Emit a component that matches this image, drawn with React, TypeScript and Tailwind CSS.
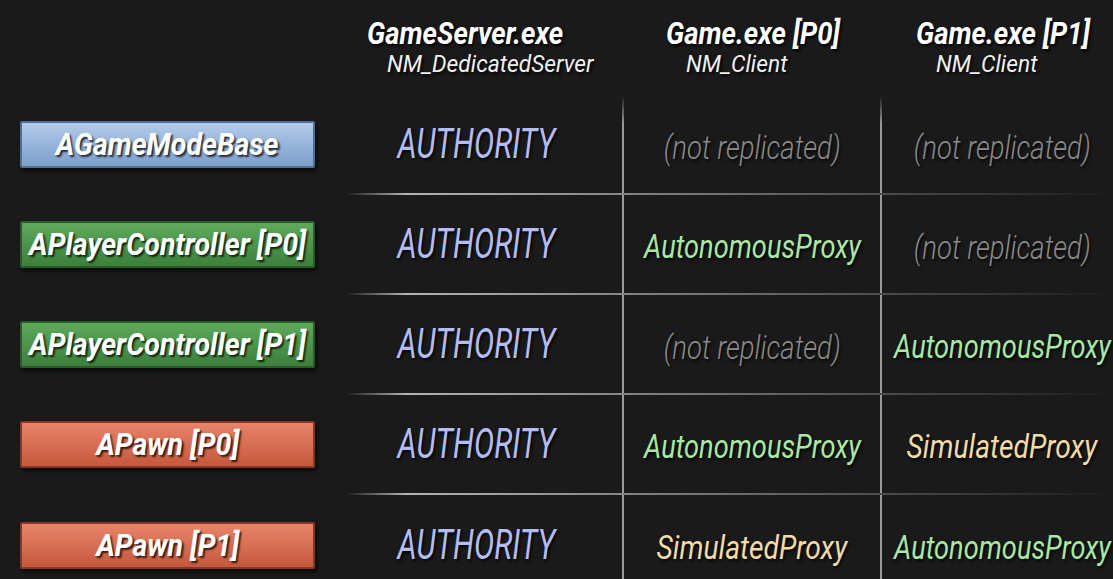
import React from "react";

type Cell = { text: string; kind: "auth" | "none" | "auto" | "sim" };

const rows: { label: string; color: "blue" | "green" | "orange"; cells: Cell[] }[] = [
  {
    label: "AGameModeBase",
    color: "blue",
    cells: [
      { text: "AUTHORITY", kind: "auth" },
      { text: "(not replicated)", kind: "none" },
      { text: "(not replicated)", kind: "none" },
    ],
  },
  {
    label: "APlayerController [P0]",
    color: "green",
    cells: [
      { text: "AUTHORITY", kind: "auth" },
      { text: "AutonomousProxy", kind: "auto" },
      { text: "(not replicated)", kind: "none" },
    ],
  },
  {
    label: "APlayerController [P1]",
    color: "green",
    cells: [
      { text: "AUTHORITY", kind: "auth" },
      { text: "(not replicated)", kind: "none" },
      { text: "AutonomousProxy", kind: "auto" },
    ],
  },
  {
    label: "APawn [P0]",
    color: "orange",
    cells: [
      { text: "AUTHORITY", kind: "auth" },
      { text: "AutonomousProxy", kind: "auto" },
      { text: "SimulatedProxy", kind: "sim" },
    ],
  },
  {
    label: "APawn [P1]",
    color: "orange",
    cells: [
      { text: "AUTHORITY", kind: "auth" },
      { text: "SimulatedProxy", kind: "sim" },
      { text: "AutonomousProxy", kind: "auto" },
    ],
  },
];

const badgeClass: Record<string, string> = {
  blue: "bg-gradient-to-b from-[#b2cbea] to-[#7c9fcb] border-[#4f6f98]",
  green: "bg-gradient-to-b from-[#5fa95c] to-[#3c803b] border-[#2b5a2b]",
  orange: "bg-gradient-to-b from-[#e8846a] to-[#c6583b] border-[#863722]",
};

function CellText({ cell }: { cell: Cell }) {
  if (cell.kind === "auth")
    return (
      <span className="inline-block shrink-0 whitespace-nowrap text-[42px] font-normal italic leading-none text-[#b4bcf2] scale-x-[0.72] [text-shadow:2px_2px_3px_rgba(0,0,0,0.85)]">
        {cell.text}
      </span>
    );
  if (cell.kind === "none")
    return (
      <span className="mt-[6px] inline-block shrink-0 whitespace-nowrap text-[34px] font-light italic leading-none text-[#8a8a8a] scale-x-[0.81] [text-shadow:2px_2px_3px_rgba(0,0,0,0.85)]">
        {cell.text}
      </span>
    );
  if (cell.kind === "auto")
    return (
      <span className="mt-[4px] inline-block shrink-0 whitespace-nowrap text-[34px] font-normal italic leading-none text-[#a9e8a4] scale-x-[0.8] [text-shadow:2px_2px_3px_rgba(0,0,0,0.85)]">
        {cell.text}
      </span>
    );
  return (
    <span className="mt-[4px] inline-block shrink-0 whitespace-nowrap text-[34px] font-normal italic leading-none text-[#f2dba6] scale-x-[0.83] [text-shadow:2px_2px_3px_rgba(0,0,0,0.85)]">
      {cell.text}
    </span>
  );
}

function VLine({ first }: { first: boolean }) {
  return (
    <div
      className={
        "w-[2px] self-stretch shrink-0 " +
        (first
          ? "bg-gradient-to-b from-transparent via-[#9a9a9a] via-[30%] to-[#9a9a9a]"
          : "bg-[#9a9a9a]")
      }
    />
  );
}

function Header({ title, sub, pl }: { title: string; sub: string; pl: string }) {
  return (
    <div className={"flex flex-col pt-[17px] " + pl}>
      <span className="inline-block origin-left whitespace-nowrap text-[32px] font-bold italic leading-none text-white scale-x-[0.86] [text-shadow:2px_2px_3px_rgba(0,0,0,0.9)]">
        {title}
      </span>
      <span className="mt-[3px] ml-[20px] inline-block origin-left whitespace-nowrap text-[24px] font-normal italic leading-none text-[#f0f0f0] scale-x-[0.95] [text-shadow:2px_2px_3px_rgba(0,0,0,0.9)]">
        {sub}
      </span>
    </div>
  );
}

export default function App() {
  return (
    <div className="w-[1113px] h-[579px] overflow-hidden bg-[#1a1a1a] font-['Roboto',sans-serif]">
      <div className="grid h-[95px] grid-cols-[330px_292px_258px_242px]">
        <div />
        <Header title="GameServer.exe" sub="NM_DedicatedServer" pl="pl-[37px]" />
        <Header title="Game.exe [P0]" sub="NM_Client" pl="pl-[44px]" />
        <Header title="Game.exe [P1]" sub="NM_Client" pl="pl-[36px]" />
      </div>
      {rows.map((row, i) => (
        <React.Fragment key={i}>
          <div className={"grid grid-cols-[330px_292px_258px_242px] " + (i === 4 ? "h-[100px]" : "h-[98px]")}>
            <div className="flex items-center pl-[20px]">
              <div
                className={
                  "flex h-[47px] w-[295px] items-center justify-center rounded-[2px] border-2 shadow-[2px_3px_4px_rgba(0,0,0,0.6)] " +
                  badgeClass[row.color]
                }
              >
                <span className="inline-block shrink-0 whitespace-nowrap text-[31px] font-bold italic leading-none text-white scale-x-[0.92] [text-shadow:2px_2px_2px_rgba(0,0,0,0.75)]">
                  {row.label}
                </span>
              </div>
            </div>
            <div className="flex min-w-0 items-center justify-center">
              <CellText cell={row.cells[0]} />
            </div>
            <div className="flex min-w-0">
              <VLine first={i === 0} />
              <div className="flex min-w-0 flex-1 items-center justify-center">
                <CellText cell={row.cells[1]} />
              </div>
            </div>
            <div className="flex min-w-0">
              <VLine first={i === 0} />
              <div className="flex min-w-0 flex-1 items-center justify-center">
                <CellText cell={row.cells[2]} />
              </div>
            </div>
          </div>
          {i < 4 && (
            <div className="ml-[345px] h-[2px] bg-gradient-to-r from-transparent via-[#b4b4b4] via-[8%] to-transparent" />
          )}
        </React.Fragment>
      ))}
    </div>
  );
}
